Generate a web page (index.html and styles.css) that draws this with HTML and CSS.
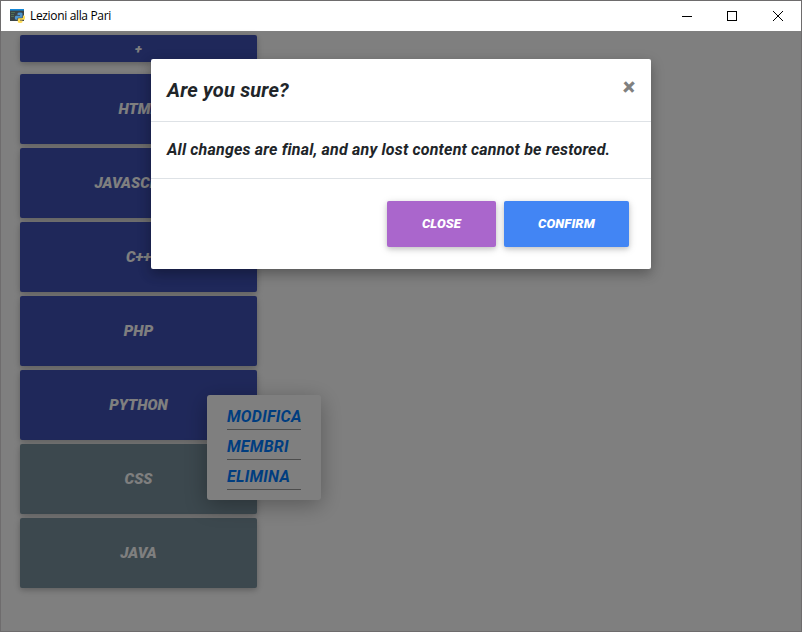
FILE: index.html
```html
<!DOCTYPE html>
<html lang="it">
<head>
<meta charset="utf-8">
<title>Lezioni alla Pari</title>
<link rel="stylesheet" href="styles.css">
</head>
<body>
<div class="window">
  <header class="titlebar">
    <svg class="app-icon" width="16" height="16" viewBox="0 0 16 16">
      <rect x="1" y="1" width="14" height="12" fill="#3b4548"/>
      <rect x="1" y="1" width="14" height="1.600" fill="#1688d8"/>
      <path d="M2 4.500h4M2 6.500h3M2 8.500h3" stroke="#4f7055" stroke-width="1"/>
      <path d="M8.500 5.500q0-1 2.500-1t2.500 1v3q0 1.200-1.200 1.200H9.500q-1.300 0-1.300 2H7q-1.200 0-1.200-2T7 7.700h4V7H8.500z" fill="#4f94cc"/>
      <path d="M14 7.500h1q1 0 1 2.200t-1 2.100h-4v.6h2.500V14q0 1-2.300 1t-2.400-1v-2.500q0-1.200 1.200-1.200h2.700q1.300 0 1.300-1.500z" fill="#ffdc56"/>
    </svg>
    <span class="caption">Lezioni alla Pari</span>
    <div class="controls">
      <svg width="46" height="29" viewBox="0 0 46 29" shape-rendering="crispEdges"><path d="M18 14.500h10" stroke="#000"/></svg>
      <svg width="45" height="29" viewBox="0 0 45 29" shape-rendering="crispEdges"><rect x="17.500" y="9.500" width="9" height="9" fill="none" stroke="#000"/></svg>
      <svg width="46" height="29" viewBox="0 0 46 29"><path d="M18 9l10 10M28 9L18 19" stroke="#000" stroke-width="1"/></svg>
    </div>
  </header>
  <main class="content">
    <nav class="courses">
      <button class="course add">+</button>
      <button class="course">HTML</button>
      <button class="course">JAVASCRIPT</button>
      <button class="course">C++</button>
      <button class="course">PHP</button>
      <button class="course">PYTHON</button>
      <button class="course grey">CSS</button>
      <button class="course grey">JAVA</button>
    </nav>
    <div class="context-menu">
      <a>MODIFICA</a>
      <a>MEMBRI</a>
      <a>ELIMINA</a>
    </div>
    <div class="backdrop">
      <section class="modal">
        <div class="modal-header">
          <h5>Are you sure?</h5>
          <span class="dismiss">×</span>
        </div>
        <div class="modal-body">All changes are final, and any lost content cannot be restored.</div>
        <div class="modal-footer">
          <button class="btn close">CLOSE</button>
          <button class="btn confirm">CONFIRM</button>
        </div>
      </section>
    </div>
  </main>
</div>
</body>
</html>
```
FILE: styles.css
```css
* { box-sizing: border-box; }

body {
  margin: 0;
  font: italic 700 16px/1.5 Roboto, sans-serif;
  color: #212529;
}

.window {
  display: flex;
  flex-direction: column;
  width: 802px;
  height: 632px;
  border: 1px solid #6e6c6d;
  background: #fff;
  overflow: hidden;
}

.titlebar {
  display: flex;
  align-items: center;
  flex: 0 0 30px;
  padding-left: 8px;
  font: 400 12px/16px "Open Sans", sans-serif;
  color: #000;
}

.caption {
  margin-left: 5px;
  letter-spacing: -0.34px;
}

.controls {
  display: flex;
  margin-left: auto;
}

.content {
  position: relative;
  flex: 1;
  padding: 4px 19px;
}

.courses {
  display: flex;
  flex-direction: column;
  gap: 4px;
  width: 237px;
}

button {
  border: 0;
  padding: 0;
  border-radius: 2px;
  color: #fff;
  font: italic 900 15px/1.5 Roboto, sans-serif;
  letter-spacing: 0.04px;
  box-shadow: 0 2px 5px rgba(0, 0, 0, .16), 0 2px 10px rgba(0, 0, 0, .12);
}

.course {
  height: 70px;
  background: #3f51b5;
}

.course.add {
  height: 27px;
  margin-bottom: 8px;
  font-size: 13px;
}

.course.grey { background: #78909c; }

.context-menu {
  position: absolute;
  left: 206px;
  top: 364px;
  width: 114px;
  height: 105px;
  padding: 9px 20px;
  border-radius: 3px;
  background: #fff;
  box-shadow: 0 5px 22px rgba(0, 0, 0, .3);
}

.context-menu a {
  display: block;
  height: 26px;
  margin-bottom: 4px;
  border-bottom: 1px solid #999;
  color: #007bff;
  line-height: 26px;
  letter-spacing: 0.25px;
  white-space: nowrap;
}

.backdrop {
  position: absolute;
  inset: 0;
  padding-top: 28px;
  background: rgba(0, 0, 0, .5);
}

.modal {
  width: 500px;
  margin: 0 auto;
  border-radius: 2px;
  background: #fff;
  box-shadow: 0 5px 11px rgba(0, 0, 0, .18), 0 4px 15px rgba(0, 0, 0, .15);
}

.modal-header {
  display: flex;
  justify-content: space-between;
  height: 63px;
  padding: 16px;
  border-bottom: 1px solid #dee2e6;
}

.modal-header h5 {
  margin: 0;
  font-size: 20px;
  line-height: 30px;
  letter-spacing: 0.18px;
}

.dismiss {
  color: #808080;
  font: italic 900 24px/24px Roboto, sans-serif;
  transform: skewX(6deg);
}

.modal-body {
  height: 56px;
  padding: 16px;
  letter-spacing: 0.19px;
}

.modal-footer {
  display: flex;
  justify-content: flex-end;
  gap: 8px;
  height: 91px;
  padding: 22px;
  border-top: 1px solid #dee2e6;
}

.btn {
  height: 46px;
  font-size: 13px;
  letter-spacing: 0.15px;
}

.btn.close { width: 109px; background: #aa66cc; }
.btn.confirm { width: 125px; background: #4285f4; }
```
